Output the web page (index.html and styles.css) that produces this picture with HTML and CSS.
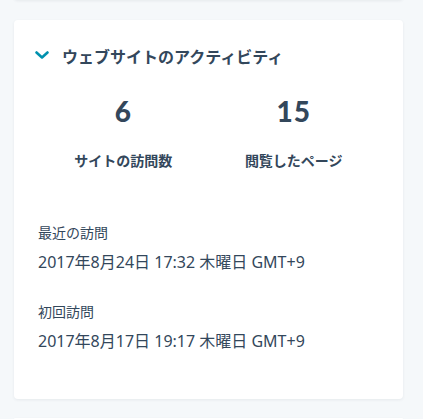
FILE: index.html
```html
<!DOCTYPE html>
<html>
	<head>
		<title>ウェブサイトのアクティビティ</title>
		<link rel="stylesheet" href="styles.css">
	</head>
	<body>
		<div class="card card-prev"></div>
		<div class="card">
			<div class="card-header">
				<svg class="chevron" width="14" height="9" viewBox="0 0 14 9">
					<polyline points="1.5,1.5 7,6.5 12.5,1.5" fill="none" stroke="#0091ae" stroke-width="2.6" stroke-linecap="round" stroke-linejoin="round"/>
				</svg>
				<h2 class="card-title">ウェブサイトのアクティビティ</h2>
			</div>
			<div class="stats">
				<div class="stat">
					<div class="stat-value">6</div>
					<div class="stat-label">サイトの訪問数</div>
				</div>
				<div class="stat">
					<div class="stat-value">15</div>
					<div class="stat-label">閲覧したページ</div>
				</div>
			</div>
			<div class="visits">
				<div class="visit">
					<div class="visit-label">最近の訪問</div>
					<div class="visit-date">2017年8月24日 17:32 木曜日 GMT+9</div>
				</div>
				<div class="visit">
					<div class="visit-label">初回訪問</div>
					<div class="visit-date">2017年8月17日 19:17 木曜日 GMT+9</div>
				</div>
			</div>
		</div>
		<div class="card card-next"></div>
	</body>
</html>
```

FILE: styles.css
```css
body {
	margin: 0;
	padding: 0 20px 0 14px;
	background: #f5f8fa;
	font-family: "Noto Sans CJK JP", "Noto Sans", sans-serif;
	color: #33475b;
	overflow: hidden;
	height: 419px;
}

.card {
	background: #fff;
	border-radius: 4px;
	box-shadow: 0 1px 3px rgba(45, 62, 80, 0.08);
	padding: 24px 24px 46px 21px;
	margin-bottom: 19px;
}

.card-prev {
	height: 20px;
	padding: 0;
	margin-top: -20px;
	margin-bottom: 20px;
}

.card-next {
	height: 2px;
	padding: 0;
	margin-bottom: 0;
}

.card-header {
	display: flex;
	align-items: center;
	height: 24px;
}

.chevron {
	display: block;
	margin-right: 13px;
	margin-top: -1px;
}

.card-title {
	margin: 0;
	font-size: 16px;
	font-weight: 700;
	line-height: 24px;
}

.stats {
	display: grid;
	grid-template-columns: 1fr 1fr;
	margin-top: 27px;
	padding-left: 3px;
}

.stat {
	text-align: center;
}

.stat-value {
	font-family: Lato, sans-serif;
	font-size: 28px;
	font-weight: 900;
	letter-spacing: 1px;
	line-height: 32px;
}

.stat-label {
	margin-top: 23px;
	font-size: 14px;
	font-weight: 700;
	line-height: 20px;
}

.visits {
	margin-top: 52px;
	padding-left: 3px;
}

.visit + .visit {
	margin-top: 27px;
}

.visit-label {
	font-size: 14px;
	line-height: 20px;
}

.visit-date {
	margin-top: 8px;
	font-family: "Noto Sans", "Noto Sans CJK JP", sans-serif;
	font-size: 16px;
	line-height: 24px;
}
```
